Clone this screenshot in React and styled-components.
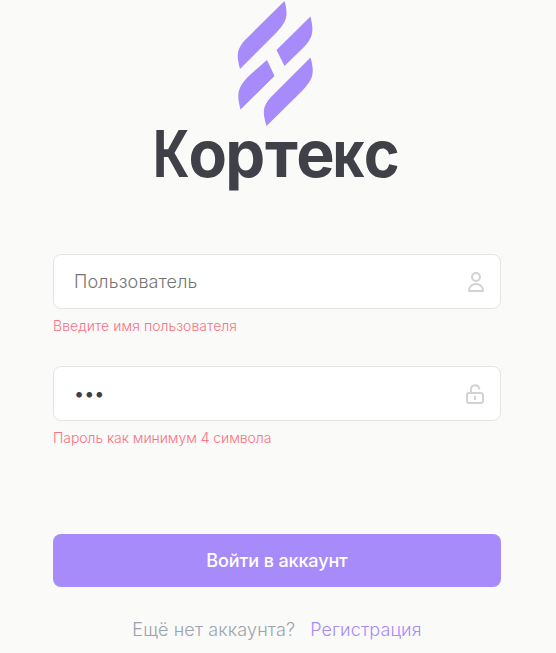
import React from "react";
import styled, { createGlobalStyle } from "styled-components";

const GlobalStyle = createGlobalStyle`
  *, *::before, *::after { box-sizing: border-box; }
  body {
    margin: 0;
    background: #fafaf8;
    font-family: Inter, "Liberation Sans", sans-serif;
    overflow: hidden;
  }
`;

const Page = styled.main`
  height: 653px;
  padding: 0 55px 0 53px;
  display: flex;
  flex-direction: column;
`;

const Logo = styled.svg`
  display: block;
  width: 260px;
  height: 195px;
  margin: 0 0 59px 93px;
  flex: none;
`;

const Wordmark = styled.text`
  font: 700 64.5px Inter, sans-serif;
  fill: #404148;
`;

const Form = styled.form`
  display: flex;
  flex-direction: column;
`;

const Field = styled.div`
  height: 112px;
`;

const InputBox = styled.label`
  display: flex;
  align-items: center;
  height: 55px;
  padding: 0 14px 0 20px;
  border: 1px solid #e4e4e4;
  border-radius: 8px;
  background: #fff;
`;

const Input = styled.input`
  flex: 1;
  min-width: 0;
  padding: 0;
  border: 0;
  outline: 0;
  background: transparent;
  color: #404148;
  font: 400 18px Inter, sans-serif;
  &::placeholder { color: #757575; opacity: 1; font-weight: 350; letter-spacing: 0.16px; }
`;

const FieldIcon = styled.svg`
  flex: none;
  width: 22px;
  height: 24px;
  fill: none;
  stroke: #d3d3d3;
  stroke-width: 2;
  stroke-linejoin: round;
`;

const ErrorText = styled.div`
  margin-top: 8px;
  font-size: 14px;
  line-height: 18px;
  font-weight: 300;
  letter-spacing: ${(p) => p.$tracking || "0"};
  color: #fb7185;
  white-space: nowrap;
`;

const Submit = styled.button`
  height: 53px;
  margin-top: 56px;
  border: 0;
  border-radius: 8px;
  background: #a78bfa;
  color: #fff;
  font: 500 18px Inter, sans-serif;
  letter-spacing: -0.12px;
`;

const Footer = styled.div`
  display: flex;
  justify-content: center;
  gap: 15px;
  margin-top: 31px;
  font-size: 18px;
  line-height: 24px;
  font-weight: 300;
  letter-spacing: 0.14px;
  color: #9ca3af;
  white-space: nowrap;
`;

const Link = styled.a`
  color: #a78bfa;
`;

export default function App() {
  return (
    <>
      <GlobalStyle />
      <Page>
        <Logo viewBox="146 0 260 195">
          <g fill="#a78bfa">
            <path d="M284.5 1C289 17 286 22 276 33L240 69C236 55 237 49 245 40Z" />
            <path d="M310.5 16.500C314 32 313 37 304 47L284.500 66L276.500 50Z" />
            <path d="M267 60L274.500 76L240.500 109.500C237 96 237 89 246 79Q249 75.500 267 60Z" />
            <path d="M310.500 57.500C315 74 313 79 302 91L266.500 126C262 111 263 106 271 97Z" />
          </g>
          <Wordmark y="176.500">
            <tspan x="153" textLength="36.500" lengthAdjust="spacingAndGlyphs">К</tspan>
            <tspan x="188.500" textLength="38.500" lengthAdjust="spacingAndGlyphs">о</tspan>
            <tspan x="225.200" textLength="40" lengthAdjust="spacingAndGlyphs">р</tspan>
            <tspan x="265">т</tspan>
            <tspan x="296.200">е</tspan>
            <tspan x="332.500" textLength="32" lengthAdjust="spacingAndGlyphs">к</tspan>
            <tspan x="363.700" textLength="36" lengthAdjust="spacingAndGlyphs">с</tspan>
          </Wordmark>
        </Logo>
        <Form onSubmit={(e) => e.preventDefault()}>
          <Field>
            <InputBox>
              <Input placeholder="Пользователь" aria-label="Пользователь" />
              <FieldIcon viewBox="0 0 22 24">
                <circle cx="12" cy="7" r="4" />
                <path d="M5 21C5 11.700 19 11.700 19 21Z" />
              </FieldIcon>
            </InputBox>
            <ErrorText $tracking="0.06px">Введите имя пользователя</ErrorText>
          </Field>
          <Field>
            <InputBox>
              <Input type="password" defaultValue="123" aria-label="Пароль" />
              <FieldIcon viewBox="0 0 22 24">
                <rect x="3" y="11" width="16" height="10" rx="2" />
                <path d="M7 11V7.500C7 2 14.500 1.500 15.500 7.500M11 14v4" />
              </FieldIcon>
            </InputBox>
            <ErrorText $tracking="-0.06px">Пароль как минимум 4 символа</ErrorText>
          </Field>
          <Submit>Войти в аккаунт</Submit>
        </Form>
        <Footer>
          <span>Ещё нет аккаунта?</span>
          <Link>Регистрация</Link>
        </Footer>
      </Page>
    </>
  );
}
